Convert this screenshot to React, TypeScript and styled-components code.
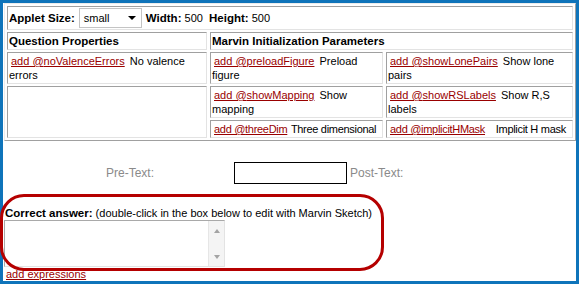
import React from "react";
import styled, { createGlobalStyle } from "styled-components";

const Global = createGlobalStyle`
  html, body { margin: 0; padding: 0; background: #fff; }
  body { font-family: "Liberation Sans", Arial, sans-serif; }
`;

const Page = styled.div`
  position: relative;
  width: 579px;
  height: 284px;
`;

const Frame = styled.div`
  box-sizing: border-box;
  width: 579px;
  height: 284px;
  border: 3px solid #0f74ba;
  background: #fff;
  font-family: "Liberation Sans", Arial, sans-serif;
  font-size: 11px;
  line-height: 14px;
  color: #000;
  display: flex;
  flex-direction: column;
  align-items: flex-start;
`;

const Table = styled.div`
  margin-left: 1px;
  display: grid;
  grid-template-columns: 200px 173px 187px;
  grid-template-rows: 24px 18px 32px 32px 18px;
  column-gap: 3px;
  row-gap: 2px;
  padding: 2px;
  border: 1px solid;
  border-color: #ececec #a0a0a0 #a0a0a0 #ececec;
`;

const Cell = styled.div<{ $col: string; $row: string; $tight?: boolean }>`
  grid-column: ${(p) => p.$col};
  grid-row: ${(p) => p.$row};
  border: 1px solid;
  border-color: #a0a0a0 #e3e3e3 #e3e3e3 #a0a0a0;
  padding: 0 1px;
  display: flex;
  align-items: center;
  min-width: 0;
  overflow: hidden;
  white-space: ${(p) => (p.$tight ? "nowrap" : "normal")};
  letter-spacing: ${(p) => (p.$tight ? "-0.3px" : "normal")};
`;

const CellText = styled.div`
  width: 100%;
`;

const Bold = styled.b`
  font-size: 11.5px;
  font-weight: bold;
`;

const FakeSelect = styled.div`
  box-sizing: border-box;
  width: 63px;
  height: 20px;
  margin: 0 4px;
  border: 1px solid #c4c4c4;
  background: #fff;
  display: flex;
  align-items: center;
  justify-content: space-between;
  padding: 0 4px 0 4px;
  font-size: 11px;
`;

const Caret = styled.span`
  width: 0;
  height: 0;
  border-left: 4px solid transparent;
  border-right: 4px solid transparent;
  border-top: 4px solid #000;
  margin-right: 1px;
`;

const ParamLink = styled.a<{ $gap?: number }>`
  color: #990000;
  text-decoration: underline;
  margin-left: 2px;
  margin-right: ${(p) => p.$gap ?? 2}px;
  cursor: pointer;
`;

const PreRow = styled.div`
  display: flex;
  align-items: center;
  margin-top: 21px;
  padding-left: 103px;
  font-size: 12px;
  color: #8a8a8a;
`;

const PreLabel = styled.span`
  width: 128px;
`;

const TextInput = styled.div`
  box-sizing: border-box;
  width: 113px;
  height: 22px;
  border: 1px solid #000;
  background: #fff;
`;

const PostLabel = styled.span`
  margin-left: 3px;
`;

const AnswerLabel = styled.div`
  margin-top: 22px;
  padding-left: 2px;
  white-space: nowrap;
`;

const AnswerBox = styled.div`
  box-sizing: border-box;
  margin-left: 1px;
  width: 221px;
  height: 47px;
  border: 1px solid;
  border-color: #a9a9a9 #e3e3e3 #e3e3e3 #a9a9a9;
  display: flex;
  justify-content: flex-end;
`;

const ScrollBar = styled.div`
  width: 15px;
  background: #f4f4f4;
  border-left: 1px solid #e6e6e6;
  display: flex;
  flex-direction: column;
  justify-content: space-between;
  align-items: center;
  padding: 8px 0 7px;
`;

const Arrow = styled.span<{ $down?: boolean }>`
  width: 0;
  height: 0;
  border-left: 3.5px solid transparent;
  border-right: 3.5px solid transparent;
  ${(p) =>
    p.$down
      ? "border-top: 4px solid #a3a3a3;"
      : "border-bottom: 4px solid #a3a3a3;"}
`;

const ExprLink = styled.a`
  margin-left: 3px;
  color: #990000;
  text-decoration: underline;
  cursor: pointer;
`;

const Annotation = styled.div`
  position: absolute;
  left: 0;
  top: 194px;
  width: 384px;
  height: 77px;
  box-sizing: border-box;
  border: 3px solid #b50000;
  border-radius: 24px;
  pointer-events: none;
`;

type Param = { name: string; label: string; col: string; row: string; gap?: number; tight?: boolean };

const params: Param[] = [
  { name: "noValenceErrors", label: "No valence errors", col: "1", row: "3" },
  { name: "preloadFigure", label: "Preload figure", col: "2", row: "3" },
  { name: "showLonePairs", label: "Show lone pairs", col: "3", row: "3" },
  { name: "showMapping", label: "Show mapping", col: "2", row: "4" },
  { name: "showRSLabels", label: "Show R,S labels", col: "3", row: "4" },
  { name: "threeDim", label: "Three dimensional", col: "2", row: "5", gap: 1, tight: true },
  { name: "implicitHMask", label: "Implicit H mask", col: "3", row: "5", gap: 8, tight: true },
];

export default function App() {
  return (
    <Page>
      <Global />
      <Frame>
        <Table>
          <Cell $col="1 / -1" $row="1">
            <Bold>Applet Size:</Bold>
            <FakeSelect>
              <span>small</span>
              <Caret />
            </FakeSelect>
            <Bold>Width:</Bold>&nbsp;500&nbsp;&nbsp;<Bold>Height:</Bold>&nbsp;500
          </Cell>
          <Cell $col="1" $row="2">
            <Bold>Question Properties</Bold>
          </Cell>
          <Cell $col="2 / span 2" $row="2">
            <Bold>Marvin Initialization Parameters</Bold>
          </Cell>
          <Cell $col="1" $row="4 / span 2" />
          {params.map((p) => (
            <Cell key={p.name} $col={p.col} $row={p.row} $tight={p.tight}>
              <CellText>
                <ParamLink $gap={p.gap}>add @{p.name}</ParamLink> {p.label}
              </CellText>
            </Cell>
          ))}
        </Table>
        <PreRow>
          <PreLabel>Pre-Text:</PreLabel>
          <TextInput />
          <PostLabel>Post-Text:</PostLabel>
        </PreRow>
        <AnswerLabel>
          <Bold>Correct answer:</Bold> (double-click in the box below to edit with Marvin Sketch)
        </AnswerLabel>
        <AnswerBox>
          <ScrollBar>
            <Arrow />
            <Arrow $down />
          </ScrollBar>
        </AnswerBox>
        <ExprLink>add expressions</ExprLink>
      </Frame>
      <Annotation />
    </Page>
  );
}
